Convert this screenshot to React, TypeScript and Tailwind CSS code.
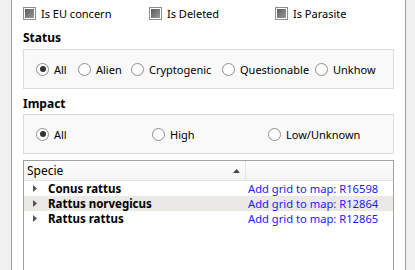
import React from 'react';

const font = { fontFamily: '"Segoe UI", "Noto Sans", "Open Sans", sans-serif' };

const Check = ({ label }: { label: string }) => (
  <div className="flex items-center gap-[5px]">
    <span className="flex h-[13px] w-[13px] items-center justify-center border border-[#8e8f8f] bg-white">
      <span className="h-[9px] w-[9px] bg-gradient-to-br from-[#5c5c5c] to-[#9a9a9a]" />
    </span>
    <span>{label}</span>
  </div>
);

const Radio = ({ label, on }: { label: string; on?: boolean }) => (
  <div className="flex items-center gap-[5px]">
    <span className="flex h-[13px] w-[13px] items-center justify-center rounded-full border border-[#8e8f8f] bg-white">
      {on && <span className="h-[6px] w-[6px] rounded-full bg-[#333]" />}
    </span>
    <span>{label}</span>
  </div>
);

const species = [
  { name: 'Conus rattus', grid: 'R16598' },
  { name: 'Rattus norvegicus', grid: 'R12864', sel: true },
  { name: 'Rattus rattus', grid: 'R12865' },
];

export default function App() {
  return (
    <div className="flex h-[270px] w-[415px] overflow-hidden bg-[#f0f0f0] text-[11px] leading-[15px] text-black" style={font}>
      <div className="ml-[11px] mr-[9px] flex-1 border-x border-[#a0a0a0] bg-white px-[11px] pt-[6px]">
        <div className="flex h-[14px] items-center">
          <div className="w-[126px]"><Check label="Is EU concern" /></div>
          <div className="w-[126px]"><Check label="Is Deleted" /></div>
          <Check label="Is Parasite" />
        </div>

        <div className="mt-[9px] text-[12px] font-bold leading-[17px]">Status</div>
        <div className="mt-[3px] flex h-[40px] items-center border border-[#dcdcdc] bg-[#f9f9f9] pl-[12px]">
          <div className="w-[42px]"><Radio label="All" on /></div>
          <div className="w-[53px]"><Radio label="Alien" /></div>
          <div className="w-[91px]"><Radio label="Cryptogenic" /></div>
          <div className="w-[93px]"><Radio label="Questionable" /></div>
          <Radio label="Unkhow" />
        </div>

        <div className="mt-[6px] text-[12px] font-bold leading-[17px]">Impact</div>
        <div className="mt-[2px] flex h-[40px] items-center border border-[#dcdcdc] bg-[#f9f9f9] pl-[12px]">
          <div className="w-[116px]"><Radio label="All" on /></div>
          <div className="w-[116px]"><Radio label="High" /></div>
          <Radio label="Low/Unknown" />
        </div>

        <div className="mt-[6px] h-[120px] border border-[#a0a0a0] bg-white">
          <div className="flex h-[20px] border-b border-[#e5e5e5] bg-gradient-to-b from-white to-[#f3f3f3]">
            <div className="flex w-[222px] items-center justify-between border-r border-[#e5e5e5] pl-[3px] pr-[5px]">
              <span className="text-[12px]">Specie</span>
              <svg width="7" height="4" viewBox="0 0 7 4"><path d="M0 4 L3.5 0 L7 4 Z" fill="#444" /></svg>
            </div>
          </div>
          {species.map((s) => (
            <div key={s.name} className={`flex h-[15px] items-center overflow-hidden leading-[14px] ${s.sel ? 'bg-[#ebe9e5]' : ''}`}>
              <div className="flex w-[223px] items-center pl-[9px]">
                <svg width="4" height="7" viewBox="0 0 4 7" className="mr-[11px]"><path d="M0 0 L4 3.5 L0 7 Z" fill="#555" /></svg>
                <span className="text-[11.5px] font-bold">{s.name}</span>
              </div>
              <span className="pl-[1px] text-[11.2px] text-[#1a1aff]">Add grid to map: {s.grid}</span>
            </div>
          ))}
        </div>
      </div>
    </div>
  );
}
